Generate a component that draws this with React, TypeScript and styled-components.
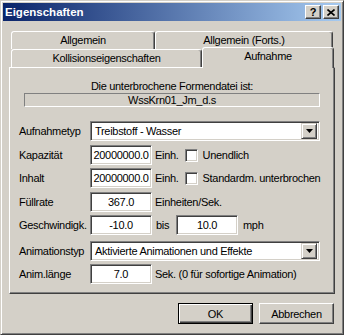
import React from 'react'
import styled, { createGlobalStyle } from 'styled-components'

const GlobalStyle = createGlobalStyle`
html, body {
  margin: 0;
  padding: 0;
  background: #d4d0c8;
}
body {
  font-family: 'Liberation Sans', Arial, sans-serif;
  font-size: 11px;
  letter-spacing: -0.3px;
  color: #000;
}
`

const face = '#d4d0c8'

const Window = styled.div`
width: 344px;
height: 335px;
box-sizing: border-box;
border: 1px solid;
border-color: ${face} #404040 #404040 ${face};
box-shadow: inset 1px 1px #fff, inset -1px -1px #808080;
padding: 2px;
display: flex;
flex-direction: column;
background: ${face};
`

const TitleBar = styled.div`
height: 18px;
display: flex;
align-items: center;
padding: 0 2px 0 2px;
background: linear-gradient(to right, #0a246a, #a6caf0);
`

const Title = styled.span`
color: #fff;
font-weight: bold;
font-size: 11.5px;
letter-spacing: 0;
`

const TitleButtons = styled.div`
margin-left: auto;
display: flex;
gap: 2px;
`

const TitleButton = styled.div`
width: 14px;
height: 12px;
border: 1px solid;
border-color: #fff #404040 #404040 #fff;
box-shadow: inset -1px -1px #808080;
background: ${face};
display: flex;
align-items: center;
justify-content: center;
font-weight: bold;
font-size: 11px;
letter-spacing: 0;
line-height: 1;
`

const Body = styled.div`
padding: 10px 6px 0 6px;
display: flex;
flex-direction: column;
`

const TabRow = styled.div<{ $front?: boolean }>`
display: flex;
align-items: flex-end;
height: 18px;
margin-left: 2px;
position: relative;
z-index: ${p => (p.$front ? 2 : 1)};
`

const Tab = styled.div<{ $w: number; $selected?: boolean }>`
width: ${p => p.$w}px;
height: ${p => (p.$selected ? 21 : 18)}px;
margin-bottom: ${p => (p.$selected ? -1 : 0)}px;
box-sizing: border-box;
border: 1px solid;
border-bottom: none;
border-color: #fff #404040 transparent #fff;
border-radius: 3px 3px 0 0;
box-shadow: inset -1px 0 #808080;
background: ${face};
display: flex;
justify-content: center;
padding-top: 2px;
position: relative;
z-index: ${p => (p.$selected ? 3 : 1)};
`

const Panel = styled.div`
height: 227px;
box-sizing: border-box;
border: 1px solid;
border-color: #fff #404040 #404040 #fff;
box-shadow: inset -1px -1px #808080;
padding-top: 12px;
display: flex;
flex-direction: column;
`

const Info = styled.div`
padding: 0 14px;
display: flex;
flex-direction: column;
`

const Caption = styled.div`
height: 13px;
line-height: 13px;
text-align: center;
`

const ShapeFile = styled.div`
height: 14px;
box-sizing: border-box;
border: 1px solid;
border-color: #808080 #fff #fff #808080;
line-height: 12px;
text-align: center;
`

const Form = styled.div`
margin-top: 14px;
padding: 0 14px 0 9px;
display: flex;
flex-direction: column;
gap: 3px;
`

const Row = styled.div<{ $top?: number }>`
display: flex;
align-items: center;
height: 20px;
margin-top: ${p => p.$top ?? 0}px;
white-space: nowrap;
`

const Label = styled.span`
width: 71px;
flex: none;
`

const Field = styled.input`
width: 62px;
height: 20px;
box-sizing: border-box;
border: 1px solid;
border-color: #808080 #fff #fff #808080;
box-shadow: inset 1px 1px #404040, inset -1px -1px ${face};
background: #fff;
padding: 0 1px;
margin: 0;
font: inherit;
letter-spacing: inherit;
color: #000;
text-align: center;
outline: none;
`

const Unit = styled.span<{ $w?: number; $ml?: number }>`
margin-left: ${p => p.$ml ?? 3}px;
width: ${p => (p.$w ? `${p.$w}px` : 'auto')};
flex: none;
`

const Check = styled.span`
width: 13px;
height: 13px;
box-sizing: border-box;
margin-left: 6px;
margin-right: 5px;
border: 1px solid;
border-color: #808080 #fff #fff #808080;
box-shadow: inset 1px 1px #404040, inset -1px -1px ${face};
background: #fff;
flex: none;
`

const Select = styled.div`
flex: 1;
height: 20px;
box-sizing: border-box;
border: 1px solid;
border-color: #808080 #fff #fff #808080;
box-shadow: inset 1px 1px #404040, inset -1px -1px ${face};
background: #fff;
display: flex;
align-items: center;
padding: 2px 2px 2px 4px;
`

const SelectText = styled.span`
flex: 1;
`

const DropButton = styled.span`
width: 16px;
height: 16px;
box-sizing: border-box;
border: 1px solid;
border-color: ${face} #404040 #404040 ${face};
box-shadow: inset 1px 1px #fff, inset -1px -1px #808080;
background: ${face};
display: flex;
align-items: center;
justify-content: center;
`

const Buttons = styled.div`
display: flex;
justify-content: flex-end;
gap: 6px;
margin-top: 9px;
padding-right: 1px;
`

const Button = styled.div<{ $default?: boolean }>`
width: 75px;
height: 21px;
box-sizing: border-box;
border: 1px solid;
border-color: ${p => (p.$default ? '#000' : '#fff #404040 #404040 #fff')};
box-shadow: ${p =>
    p.$default
      ? 'inset 1px 1px #fff, inset -1px -1px #404040, inset -2px -2px #808080'
      : 'inset -1px -1px #808080'};
display: flex;
align-items: center;
justify-content: center;
`

const Arrow = () => (
  <svg width="7" height="4" viewBox="0 0 7 4">
    <path d="M0 0h7L3.5 4z" fill="#000" />
  </svg>
)

const Dropdown: React.FC<{ value: string }> = ({ value }) => (
  <Select>
    <SelectText>{value}</SelectText>
    <DropButton>
      <Arrow />
    </DropButton>
  </Select>
)

export default function App() {
  return (
    <>
      <GlobalStyle />
      <Window>
        <TitleBar>
          <Title>Eigenschaften</Title>
          <TitleButtons>
            <TitleButton>?</TitleButton>
            <TitleButton>
              <svg width="8" height="7" viewBox="0 0 8 7">
                <path d="M0.5 0.5l7 6M7.5 0.5l-7 6" stroke="#000" strokeWidth="1.6" />
              </svg>
            </TitleButton>
          </TitleButtons>
        </TitleBar>
        <Body>
          <TabRow>
            <Tab $w={144}>Allgemein</Tab>
            <Tab $w={178}>Allgemein (Forts.)</Tab>
          </TabRow>
          <TabRow $front>
            <Tab $w={191}>Kollisionseigenschaften</Tab>
            <Tab $w={132} $selected>Aufnahme</Tab>
          </TabRow>
          <Panel>
            <Info>
              <Caption>Die unterbrochene Formendatei ist:</Caption>
              <ShapeFile>WssKrn01_Jm_d.s</ShapeFile>
            </Info>
            <Form>
              <Row>
                <Label>Aufnahmetyp</Label>
                <Dropdown value="Treibstoff - Wasser" />
              </Row>
              <Row $top={1}>
                <Label>Kapazität</Label>
                <Field readOnly value="20000000.0" />
                <Unit>Einh.</Unit>
                <Check />
                <span>Unendlich</span>
              </Row>
              <Row>
                <Label>Inhalt</Label>
                <Field readOnly value="20000000.0" />
                <Unit>Einh.</Unit>
                <Check />
                <span>Standardm. unterbrochen</span>
              </Row>
              <Row $top={1}>
                <Label>Füllrate</Label>
                <Field readOnly value="367.0" />
                <Unit>Einheiten/Sek.</Unit>
              </Row>
              <Row>
                <Label>Geschwindigk.</Label>
                <Field readOnly value="-10.0" />
                <Unit $w={20} $ml={4}>bis</Unit>
                <Field readOnly value="10.0" />
                <Unit $ml={5}>mph</Unit>
              </Row>
              <Row $top={3}>
                <Label>Animationstyp</Label>
                <Dropdown value="Aktivierte Animationen und Effekte" />
              </Row>
              <Row>
                <Label>Anim.länge</Label>
                <Field readOnly value="7.0" />
                <Unit>Sek. (0 für sofortige Animation)</Unit>
              </Row>
            </Form>
          </Panel>
          <Buttons>
            <Button $default>OK</Button>
            <Button>Abbrechen</Button>
          </Buttons>
        </Body>
      </Window>
    </>
  )
}
